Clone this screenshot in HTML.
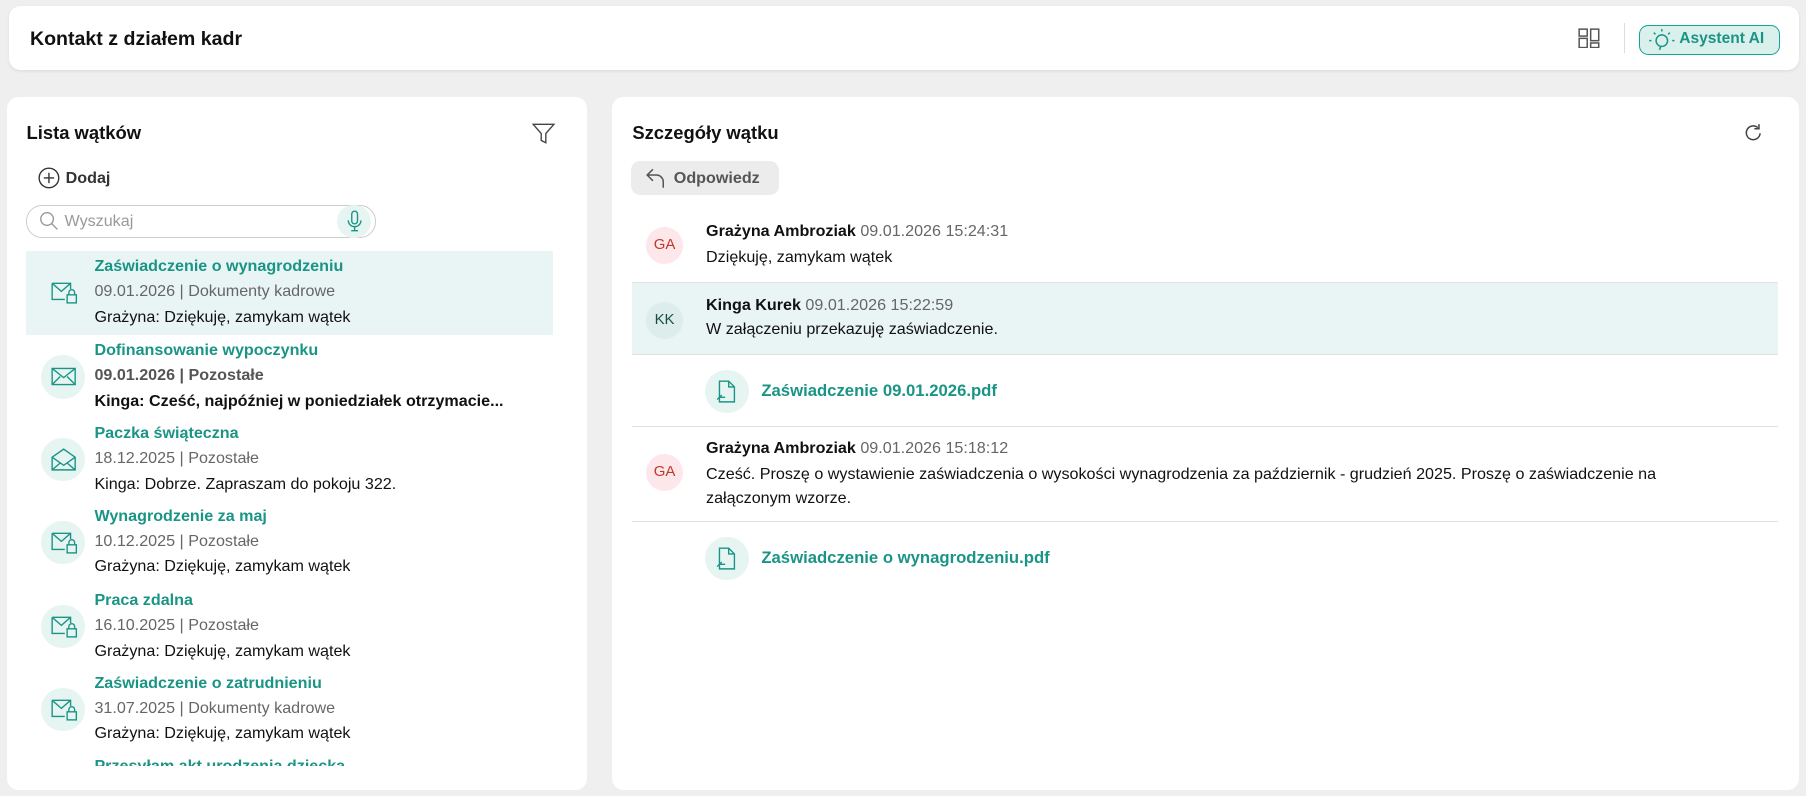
<!DOCTYPE html>
<html><head><meta charset="utf-8"><style>
html,body{margin:0;padding:0}
body{width:1568px;height:691px;background:#efefef;zoom:1.15179;font-family:"Liberation Sans",sans-serif;color:#111;position:relative;overflow:hidden}
.card{position:absolute;background:#fff;border-radius:10px}
.abs{position:absolute}
.b{font-weight:bold}
.teal{color:#1a9585}
.grey{color:#666}
.item{position:absolute;left:23px;width:457px;height:72px}
.item .ic{position:absolute;left:13px;top:17px;width:38px;height:38px;border-radius:50%;background:#e6f4f2}
.item .ic svg{position:absolute;left:8px;top:9px}
.item .t{position:absolute;left:59px;top:5px;font-size:14px;font-weight:bold;color:#1a9585;white-space:nowrap}
.item .d{position:absolute;left:59px;top:27px;font-size:14px;color:#666;white-space:nowrap}
.item .m{position:absolute;left:59px;top:49px;font-size:14px;color:#111;white-space:nowrap}
.av{position:absolute;left:561px;width:32px;height:32px;border-radius:50%;font-size:13px;text-align:center;line-height:32px}
.msg{position:absolute;left:613px;font-size:14px;white-space:nowrap}
.sep{position:absolute;left:549px;width:995px;height:1px;background:#e2e2e2}
.att{position:absolute;left:612px;width:38px;height:38px;border-radius:50%;background:#e6f4f2}
.att svg{position:absolute;left:10px;top:9px}
.attl{position:absolute;left:661px;font-size:14.5px;font-weight:bold;color:#1a9585}
</style></head><body>
<div class="card" style="left:8px;top:5px;width:1554px;height:56px;box-shadow:0 1px 3px rgba(0,0,0,.08)"></div>
<div class="abs b" style="left:26px;top:24px;font-size:17px">Kontakt z działem kadr</div>
<svg class="abs" style="left:1370px;top:24px" width="19" height="18" viewBox="0 0 19 18" fill="none" stroke="#555" stroke-width="1.3"><rect x="1" y="1" width="7" height="6"/><rect x="1" y="9" width="7" height="8"/><rect x="11" y="1" width="7" height="10"/><rect x="11" y="13" width="7" height="4"/></svg>
<div class="abs" style="left:1410px;top:20px;width:1px;height:26px;background:#ddd"></div>
<div class="abs" style="left:1423px;top:22px;width:121px;height:24px;border:1px solid #17a394;border-radius:8px;background:#d9f0ec"></div>
<svg class="abs" style="left:1431px;top:24px" width="24" height="22" viewBox="0 0 24 22" fill="none" stroke="#1a9585" stroke-width="1.3"><circle cx="12" cy="11" r="5"/><path d="M11 16l-1 3M12 1v2M5 4l1.5 1.5M19 4l-1.5 1.5M1 11h2M21 11h2"/></svg>
<div class="abs b teal" style="left:1458px;top:26px;font-size:13.5px">Asystent AI</div>

<div class="card" style="left:6px;top:84px;width:504px;height:602px"></div>
<div class="abs b" style="left:23px;top:106px;font-size:16px">Lista wątków</div>
<svg class="abs" style="left:462px;top:106px" width="20" height="20" viewBox="0 0 20 20" fill="none" stroke="#444" stroke-width="1.2"><path d="M1 2h18l-7 8v8l-4-2v-6z"/></svg>
<svg class="abs" style="left:33px;top:145px" width="19" height="19" viewBox="0 0 19 19" fill="none" stroke="#333" stroke-width="1.2"><circle cx="9.5" cy="9.5" r="8.5"/><path d="M9.5 5v9M5 9.5h9"/></svg>
<div class="abs b" style="left:57px;top:147px;font-size:14px;color:#333">Dodaj</div>
<div class="abs" style="left:23px;top:178px;width:302px;height:27px;border:1px solid #ccc;border-radius:14px"></div>
<svg class="abs" style="left:34px;top:183px" width="17" height="17" viewBox="0 0 17 17" fill="none" stroke="#999" stroke-width="1.2"><circle cx="7" cy="7" r="5.5"/><path d="M11 11l5 5"/></svg>
<div class="abs" style="left:56px;top:184px;font-size:14px;color:#999">Wyszukaj</div>
<div class="abs" style="left:293px;top:178px;width:29px;height:29px;border-radius:50%;background:#e6f4f2"></div>
<svg class="abs" style="left:300px;top:182px" width="15" height="20" viewBox="0 0 15 20" fill="none" stroke="#1a9585" stroke-width="1.2"><rect x="5" y="1" width="5" height="11" rx="2.5"/><path d="M2 9a5.5 5.5 0 0 0 11 0M7.5 15v3M4.5 18h6"/></svg>

<div style="position:absolute;left:0;top:0;width:1568px;height:665px;overflow:hidden">
<div class="item" style="top:218px;background:#e8f5f4;height:73px"><div class="ic" style="background:none"><svg width="24" height="20" viewBox="0 0 24 20" fill="none" stroke="#1a9585" stroke-width="1.2"><path d="M1 2h16v5M1 2v14h11M1 2l8 7 8-7"/><rect x="14" y="12" width="8" height="7"/><path d="M15.5 12v-2a2.5 2.5 0 0 1 5 0v2"/></svg></div><div class="t">Zaświadczenie o wynagrodzeniu</div><div class="d">09.01.2026 | Dokumenty kadrowe</div><div class="m">Grażyna: Dziękuję, zamykam wątek</div></div>
<div class="item" style="top:291px"><div class="ic"><svg width="22" height="20" viewBox="0 0 22 20" fill="none" stroke="#1a9585" stroke-width="1.2"><rect x="1" y="3" width="20" height="14"/><path d="M1 3l10 8 10-8M1 17l7-7M21 17l-7-7"/></svg></div><div class="t">Dofinansowanie wypoczynku</div><div class="d b" style="color:#555">09.01.2026 | Pozostałe</div><div class="m b">Kinga: Cześć, najpóźniej w poniedziałek otrzymacie...</div></div>
<div class="item" style="top:363px"><div class="ic"><svg width="22" height="20" viewBox="0 0 22 20" fill="none" stroke="#1a9585" stroke-width="1.2"><path d="M1 8l10-7 10 7v11H1zM1 8l10 7 10-7M1 19l7-6M21 19l-7-6"/></svg></div><div class="t">Paczka świąteczna</div><div class="d">18.12.2025 | Pozostałe</div><div class="m">Kinga: Dobrze. Zapraszam do pokoju 322.</div></div>
<div class="item" style="top:435px"><div class="ic"><svg width="24" height="20" viewBox="0 0 24 20" fill="none" stroke="#1a9585" stroke-width="1.2"><path d="M1 2h16v5M1 2v14h11M1 2l8 7 8-7"/><rect x="14" y="12" width="8" height="7"/><path d="M15.5 12v-2a2.5 2.5 0 0 1 5 0v2"/></svg></div><div class="t">Wynagrodzenie za maj</div><div class="d">10.12.2025 | Pozostałe</div><div class="m">Grażyna: Dziękuję, zamykam wątek</div></div>
<div class="item" style="top:508px"><div class="ic"><svg width="24" height="20" viewBox="0 0 24 20" fill="none" stroke="#1a9585" stroke-width="1.2"><path d="M1 2h16v5M1 2v14h11M1 2l8 7 8-7"/><rect x="14" y="12" width="8" height="7"/><path d="M15.5 12v-2a2.5 2.5 0 0 1 5 0v2"/></svg></div><div class="t">Praca zdalna</div><div class="d">16.10.2025 | Pozostałe</div><div class="m">Grażyna: Dziękuję, zamykam wątek</div></div>
<div class="item" style="top:580px"><div class="ic"><svg width="24" height="20" viewBox="0 0 24 20" fill="none" stroke="#1a9585" stroke-width="1.2"><path d="M1 2h16v5M1 2v14h11M1 2l8 7 8-7"/><rect x="14" y="12" width="8" height="7"/><path d="M15.5 12v-2a2.5 2.5 0 0 1 5 0v2"/></svg></div><div class="t">Zaświadczenie o zatrudnieniu</div><div class="d">31.07.2025 | Dokumenty kadrowe</div><div class="m">Grażyna: Dziękuję, zamykam wątek</div></div>
<div class="item" style="top:652px"><div class="ic"></div><div class="t">Przesyłam akt urodzenia dziecka</div></div>
</div>

<div class="card" style="left:531px;top:84px;width:1031px;height:602px"></div>
<div class="abs b" style="left:549px;top:106px;font-size:16px">Szczegóły wątku</div>
<svg class="abs" style="left:1514px;top:107px" width="17" height="17" viewBox="0 0 17 17" fill="none" stroke="#444" stroke-width="1.3"><path d="M14 9a6 6 0 1 1-2-5"/><path d="M13 1v4h-4"/></svg>
<div class="abs" style="left:548px;top:140px;width:128px;height:29px;background:#ececec;border-radius:8px"></div>
<svg class="abs" style="left:561px;top:145px" width="18" height="19" viewBox="0 0 18 19" fill="none" stroke="#555" stroke-width="1.3"><path d="M6 2L1 7l5 5M1 7h8a6 6 0 0 1 6 6v5"/></svg>
<div class="abs b" style="left:585px;top:147px;font-size:14px;color:#555">Odpowiedz</div>

<div class="av" style="top:197px;background:#fde7ea;color:#c0392b">GA</div>
<div class="msg" style="top:193px"><b>Grażyna Ambroziak</b> <span class="grey">09.01.2026 15:24:31</span></div>
<div class="msg" style="top:215px">Dziękuję, zamykam wątek</div>
<div class="sep" style="top:245px"></div>
<div class="abs" style="left:549px;top:246px;width:995px;height:61px;background:#e8f5f4"></div>
<div class="av" style="top:262px;background:#dcedeb;color:#1d4d45">KK</div>
<div class="msg" style="top:257px"><b>Kinga Kurek</b> <span class="grey">09.01.2026 15:22:59</span></div>
<div class="msg" style="top:278px">W załączeniu przekazuję zaświadczenie.</div>
<div class="sep" style="top:307px"></div>
<div class="att" style="top:321px"><svg width="18" height="20" viewBox="0 0 18 20" fill="none" stroke="#1a9585" stroke-width="1.2"><path d="M3 1h8l5 5v13H3zM11 1v5h5M1 17l4-4M3 15h5"/></svg></div>
<div class="attl" style="top:331px">Zaświadczenie 09.01.2026.pdf</div>
<div class="sep" style="top:370px"></div>
<div class="av" style="top:394px;background:#fde7ea;color:#c0392b">GA</div>
<div class="msg" style="top:381px"><b>Grażyna Ambroziak</b> <span class="grey">09.01.2026 15:18:12</span></div>
<div class="msg" style="top:401px;line-height:21px;white-space:normal;width:860px">Cześć. Proszę o wystawienie zaświadczenia o wysokości wynagrodzenia za październik - grudzień 2025. Proszę o zaświadczenie na załączonym wzorze.</div>
<div class="sep" style="top:452px"></div>
<div class="att" style="top:466px"><svg width="18" height="20" viewBox="0 0 18 20" fill="none" stroke="#1a9585" stroke-width="1.2"><path d="M3 1h8l5 5v13H3zM11 1v5h5M1 17l4-4M3 15h5"/></svg></div>
<div class="attl" style="top:476px">Zaświadczenie o wynagrodzeniu.pdf</div>
</body></html>
